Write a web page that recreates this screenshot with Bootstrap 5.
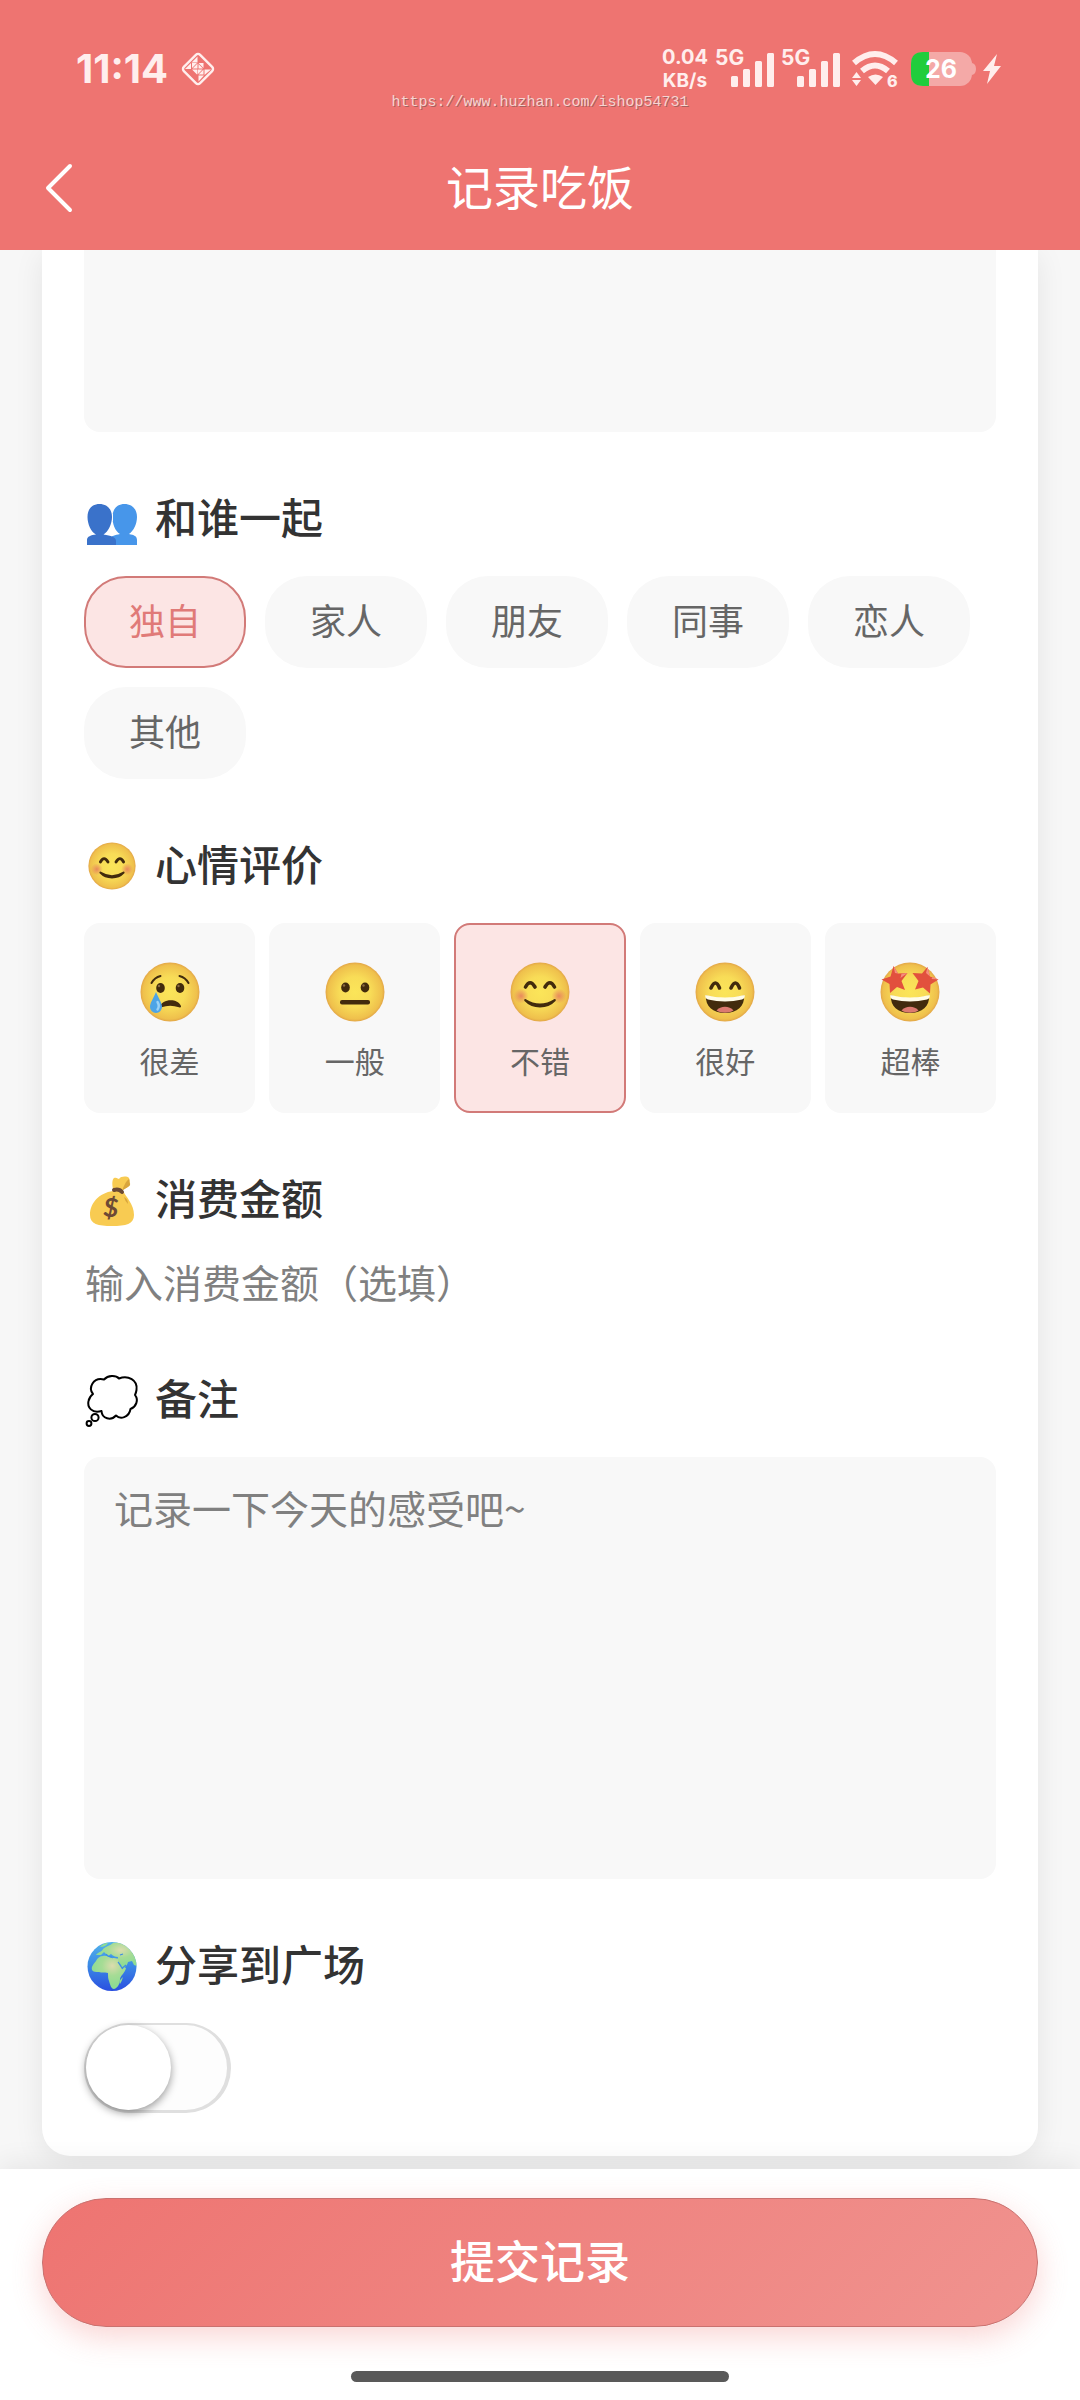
<!DOCTYPE html>
<html lang="zh-CN">
<head>
<meta charset="utf-8">
<meta name="viewport" content="width=device-width, initial-scale=1">
<title>记录吃饭</title>
<link href="https://cdn.jsdelivr.net/npm/bootstrap@5.3.0/dist/css/bootstrap.min.css" rel="stylesheet">
<style>
  :root { --brand: #ee7471; --field: #f8f8f8; --ink: #333; --soft: #666; --picked: #fce5e4; --picked-line: #d27a78; }
  body { font-family: "Noto Sans CJK SC", sans-serif; background: #f7f7f7; color: var(--ink); }
  svg { display: block; flex: none; }

  .app-head { background: var(--brand); z-index: 3; }
  .status-row { height: 126px; padding: 12px 79px 0 76px; color: #ffeeed; font-family: Inter, sans-serif; font-weight: 700; }
  .clock { font-size: 40px; line-height: 48px; }
  .speed { font-size: 20px; line-height: 23px; text-align: center; }
  .speed small { display: block; font-size: 19px; font-weight: 700; }
  .near { margin-left: 7px; }
  .apart { margin-left: 12px; }
  .title-row { height: 124px; padding-bottom: 6px; color: #fff; }
  .title-row h1 { font-size: 47px; line-height: 64px; font-weight: 400; }
  .back-btn { left: 27px; top: 28px; width: 64px; height: 68px; }
  .site-mark { top: 93px; font: 15px/20px "Liberation Mono", monospace; color: #f6d4d2; text-shadow: 1px 1px 0 #a8605e; }

  .form-card { margin: 0 42px 13px; padding: 0 42px 43px; background: #fff; border-radius: 0 0 28px 28px; box-shadow: 0 6px 30px rgba(0,0,0,.08); }
  .form-part { margin-top: 56px; }
  .part-title { gap: 15px; height: 60px; padding-bottom: 4px; margin-bottom: 28px; font-size: 42px; line-height: 56px; font-weight: 500; color: var(--ink); }
  .part-title svg { margin-top: 4px; }
  .field-box { background: var(--field); border: 0; border-radius: 16px; resize: none; padding: 21px 30px; font-size: 39px; line-height: 58px; }
  .field-top { height: 182px; border-radius: 0 0 16px 16px; }
  .field-note { height: 422px; }
  .field-line { border: 0; padding: 0 0 8px 1px; height: 56px; font-size: 39px; line-height: 48px; background: none; }
  .field-box::placeholder, .field-line::placeholder { color: #808080; opacity: 1; }

  .chip-list { gap: 19px; }
  .chip { padding: 0 43px 6px; border: 2px solid transparent; border-radius: 42px; background: var(--field); color: var(--soft); font-size: 36px; line-height: 82px; }
  .mood-list { gap: 14px; }
  .mood { padding: 37px 0 31px; gap: 18px; border: 2px solid transparent; border-radius: 16px; background: var(--field); color: var(--soft); font-size: 30px; line-height: 40px; }
  .btn-check:checked + .chip { background: var(--picked); border-color: var(--picked-line); color: #e07a78; }
  .btn-check:checked + .mood { background: var(--picked); border-color: var(--picked-line); }

  .share-switch { appearance: none; display: block; width: 147px; height: 90px; margin: 0; border: 2px solid #dfdfdf; border-right-width: 4px; border-bottom-width: 3px; border-radius: 45px; background: #fdfdfd; }
  .share-switch::before { content: ""; display: block; width: 85px; height: 85px; border-radius: 50%; background: #fff; box-shadow: 0 3px 8px rgba(0,0,0,.4); }
  .share-switch:checked { background: var(--brand); }
  .share-switch:checked::before { margin-left: auto; }

  .submit-bar { padding: 29px 42px 18px; background: #fff; box-shadow: 0 -6px 26px rgba(0,0,0,.07); z-index: 2; }
  .submit-btn { height: 129px; padding: 0 0 6px; border: 1px solid #c9716f; border-radius: 64px; color: #fff; font-size: 45px; line-height: 60px; font-weight: 500; background: linear-gradient(135deg, #ee7471, #f0938f); box-shadow: 0 10px 30px rgba(238,116,113,.3); }
  .home-line { width: 38%; height: 11px; margin-top: 44px; border-radius: 6px; background: #595959; }
</style>
</head>
<body>
<svg width="0" height="0" class="position-absolute" aria-hidden="true">
  <defs>
    <radialGradient id="skin" cx=".5" cy=".5" r=".52">
      <stop offset="0" stop-color="#fbe559"/><stop offset=".5" stop-color="#f8dc57"/><stop offset=".88" stop-color="#efc04c"/><stop offset="1" stop-color="#dd9a45"/>
    </radialGradient>
    <radialGradient id="blush"><stop offset="0" stop-color="#e88a5c"/><stop offset="1" stop-color="#e88a5c" stop-opacity="0"/></radialGradient>
    <linearGradient id="sea" x1="0" y1="0" x2="0" y2="1"><stop offset="0" stop-color="#52b2ea"/><stop offset=".45" stop-color="#3c8ce6"/><stop offset="1" stop-color="#2a4fe0"/></linearGradient>
    <radialGradient id="land" cx=".6" cy=".3" r=".6"><stop offset="0" stop-color="#dcdcae"/><stop offset=".5" stop-color="#a6dc95"/><stop offset="1" stop-color="#8edc93"/></radialGradient>
    <clipPath id="ball"><circle cx="28" cy="29.500" r="24.500"/></clipPath>
    <symbol id="smile" viewBox="0 0 60 60">
      <circle cx="30" cy="30" r="29.500" fill="url(#skin)"/>
      <circle cx="11" cy="34" r="7.500" fill="url(#blush)"/><circle cx="49" cy="34" r="7.500" fill="url(#blush)"/>
      <path d="M15.500 25q4.500-8.500 9.500 0M35 25q5-8.500 9.500 0" fill="none" stroke="#422b0d" stroke-width="3.600" stroke-linecap="round"/>
      <path d="M15.500 37q14.500 9 29 0 2 0 1 2-6 6.500-15.500 6.500T14.500 39q-1-2 1-2z" fill="#422b0d"/>
    </symbol>
    <symbol id="grin" viewBox="0 0 60 60">
      <circle cx="30" cy="30" r="29.500" fill="url(#skin)"/>
      <path d="M11 33.500c12 3.500 26 3.500 38 0C50 44 42 51 30 51S10 44 11 33.500z" fill="#422b0d"/>
      <path d="M21.500 48.500c4-5 13-5 17 0-5 3-12 3-17 0z" fill="#dc7a70"/>
      <path d="M10.500 33q19.500 5 39 0 1 3-2.500 4.500-17 4-34 0-3.500-1.500-2.500-4.500z" fill="#fffce8"/>
    </symbol>
    <symbol id="signal" viewBox="0 0 59 44">
      <text x="0" y="18" font-family="Inter, sans-serif" font-size="21" font-weight="700" fill="#ffeeed">5G</text>
      <path fill="#ffeeed" d="M17.500 29h4a1.500 1.500 0 0 1 1.500 1.500v8a1.500 1.500 0 0 1-1.500 1.500h-4a1.500 1.500 0 0 1-1.500-1.500v-8a1.500 1.500 0 0 1 1.500-1.500zM29.500 22h4a1.500 1.500 0 0 1 1.500 1.500v15a1.500 1.500 0 0 1-1.500 1.500h-4a1.500 1.500 0 0 1-1.500-1.500v-15a1.500 1.500 0 0 1 1.500-1.500zM41.500 14h4a1.500 1.500 0 0 1 1.500 1.500v23a1.500 1.500 0 0 1-1.500 1.500h-4a1.500 1.500 0 0 1-1.500-1.500v-23a1.500 1.500 0 0 1 1.500-1.500zM53.500 6h4A1.500 1.500 0 0 1 59 7.500v31a1.500 1.500 0 0 1-1.500 1.500h-4a1.500 1.500 0 0 1-1.500-1.500v-31A1.500 1.500 0 0 1 53.500 6z"/>
    </symbol>
  </defs>
</svg>

<div class="d-flex flex-column vh-100 overflow-hidden">
  <header class="app-head position-relative">
    <div class="status-row d-flex align-items-center">
      <span class="clock">11:14</span>
      <svg class="apart" width="36" height="36" viewBox="0 0 36 36" aria-hidden="true">
        <rect x="6.500" y="6.500" width="23" height="23" rx="3" transform="rotate(45 18 18)" fill="none" stroke="#ffeeed" stroke-width="2.400"/>
        <path fill="#ffeeed" d="M17.500 5.500v6h-6zM11 12v6H5zM12 12h5l-5 5zM17.500 12.500v5h-5zM18.500 12h5v5zM18.500 13l4.500 4.500h-4.500zM12 18.500h5v5zM17.500 18.500h5l-5 5zM23.500 18.500v5h-5zM24.500 18.500H31l-6.500 5.500zM18.500 24.500h5.500l-5.500 6z"/>
      </svg>
      <span class="speed ms-auto">0.04<small>KB/s</small></span>
      <svg class="near" width="59" height="44" aria-label="5G"><use href="#signal"/></svg>
      <svg class="near" width="59" height="44" aria-label="5G"><use href="#signal"/></svg>
      <svg class="apart" width="47" height="44" viewBox="0 0 47 44" aria-label="Wi-Fi 6">
        <path d="M2 16q21-18 42 0M10 24q13-11 26 0" fill="none" stroke="#ffeeed" stroke-width="6"/>
        <path fill="#ffeeed" d="M16 30q7.500-5 15 0l-7.500 8zM4.500 25l4.500 6H0zM4.500 39L9 33H0z"/>
        <text x="35" y="40" font-family="Inter, sans-serif" font-size="16" font-weight="800" fill="#ffeeed">6</text>
      </svg>
      <svg class="apart" width="65" height="36" viewBox="0 0 65 36" aria-label="26%">
        <rect x="0" y="1" width="61" height="34" rx="12" fill="#f4a9a7"/>
        <path d="M61 12q4 1 4 6t-4 6z" fill="#f4a9a7"/>
        <path d="M18 1v34h-6Q0 35 0 23V13Q0 1 12 1z" fill="#20cd3c"/>
        <text x="30" y="27" text-anchor="middle" font-family="Inter, sans-serif" font-size="25" font-weight="700" fill="#fff">26</text>
      </svg>
      <svg class="near" width="18" height="32" viewBox="0 0 18 32" aria-hidden="true"><path d="M14 1L0 18h7L4 31l14-18h-7z" fill="#ffeeed"/></svg>
    </div>
    <div class="title-row position-relative d-flex align-items-center justify-content-center">
      <button type="button" class="back-btn btn border-0 p-0 position-absolute d-flex align-items-center justify-content-center" aria-label="返回">
        <svg width="28" height="50" viewBox="0 0 28 50"><path d="M25 3L3 25l22 22" fill="none" stroke="#fff" stroke-width="4" stroke-linecap="round" stroke-linejoin="round"/></svg>
      </button>
      <h1 class="m-0">记录吃饭</h1>
    </div>
    <div class="site-mark position-absolute w-100 text-center">https://www.huzhan.com/ishop54731</div>
  </header>

  <main class="flex-grow-1 overflow-hidden">
    <form id="meal" class="form-card">
      <textarea class="field-box field-top d-block w-100" aria-label="吃饭内容"></textarea>

      <fieldset class="form-part">
        <legend class="part-title d-flex align-items-center">
          <svg width="56" height="56" viewBox="0 0 56 56" aria-hidden="true">
            <path fill="#4796ea" d="M40.500 14c7.500 0 12.500 5 12.500 13 0 7-3.500 14-8 17 5 1 8 2 8 6v5H27v-7c0-2 4-3 9-4-5-3-7.500-10-7.500-17 0-8 4.500-13 12-13z"/>
            <path fill="#3a72ca" d="M15.500 14c7.500 0 12.500 5 12.500 13 0 7-4 15-8.500 17.500C27 45.500 32 47 32 51v4H3v-5c0-3.500 4-5 9-5.500C7 42 3.500 34 3.500 27c0-8 4.500-13 12-13z"/>
            <path d="M28.500 24v7" stroke="#fff" stroke-width="1"/>
          </svg>和谁一起
        </legend>
        <div class="chip-list d-flex flex-wrap">
          <div><input class="btn-check" type="radio" name="with" id="w1" checked><label class="chip d-block" for="w1">独自</label></div>
          <div><input class="btn-check" type="radio" name="with" id="w2"><label class="chip d-block" for="w2">家人</label></div>
          <div><input class="btn-check" type="radio" name="with" id="w3"><label class="chip d-block" for="w3">朋友</label></div>
          <div><input class="btn-check" type="radio" name="with" id="w4"><label class="chip d-block" for="w4">同事</label></div>
          <div><input class="btn-check" type="radio" name="with" id="w5"><label class="chip d-block" for="w5">恋人</label></div>
          <div><input class="btn-check" type="radio" name="with" id="w6"><label class="chip d-block" for="w6">其他</label></div>
        </div>
      </fieldset>

      <fieldset class="form-part">
        <legend class="part-title d-flex align-items-center">
          <svg width="56" height="56" viewBox="0 0 56 56" aria-hidden="true"><use href="#smile" x="4" y="5" width="48" height="48"/></svg>心情评价
        </legend>
        <div class="mood-list d-flex">
          <input class="btn-check" type="radio" name="mood" id="m1">
          <label class="mood flex-fill d-flex flex-column align-items-center" for="m1">
            <svg width="60" height="60" viewBox="0 0 60 60" aria-hidden="true">
              <circle cx="30" cy="30" r="29.500" fill="url(#skin)"/>
              <path d="M11.500 21q3-5.500 9-7M48.500 21q-3-5.500-9-7" fill="none" stroke="#422b0d" stroke-width="2" stroke-linecap="round"/>
              <ellipse cx="20.500" cy="26" rx="4.300" ry="5" fill="#422b0d"/><ellipse cx="40" cy="26" rx="4.300" ry="5" fill="#422b0d"/>
              <circle cx="19" cy="24" r="1.200" fill="#8a6a42"/><circle cx="38.500" cy="24" r="1.200" fill="#8a6a42"/>
              <path d="M19.500 45.500C22 36 38 36 41 44q.5 2-2 1.300-9-3-17.500 0-2.500.7-2 .2z" fill="#422b0d"/>
              <path d="M16 30c3 7 6 11 6 15a6 6 0 0 1-12 0c0-4 3-8 6-15z" fill="#4da4e6"/>
              <path d="M17.500 40q2.500 4 0 7.500" fill="none" stroke="#9ad2f6" stroke-width="2.400" stroke-linecap="round"/>
            </svg>很差
          </label>
          <input class="btn-check" type="radio" name="mood" id="m2">
          <label class="mood flex-fill d-flex flex-column align-items-center" for="m2">
            <svg width="60" height="60" viewBox="0 0 60 60" aria-hidden="true">
              <circle cx="30" cy="30" r="29.500" fill="url(#skin)"/>
              <ellipse cx="20.500" cy="25.500" rx="4.300" ry="5" fill="#422b0d"/><ellipse cx="40" cy="25.500" rx="4.300" ry="5" fill="#422b0d"/>
              <circle cx="19" cy="23.500" r="1.200" fill="#8a6a42"/><circle cx="38.500" cy="23.500" r="1.200" fill="#8a6a42"/>
              <rect x="15" y="38" width="30" height="4.500" rx="2" fill="#422b0d"/>
            </svg>一般
          </label>
          <input class="btn-check" type="radio" name="mood" id="m3" checked>
          <label class="mood flex-fill d-flex flex-column align-items-center" for="m3"><svg width="60" height="60" aria-hidden="true"><use href="#smile"/></svg>不错</label>
          <input class="btn-check" type="radio" name="mood" id="m4">
          <label class="mood flex-fill d-flex flex-column align-items-center" for="m4">
            <svg width="60" height="60" viewBox="0 0 60 60" aria-hidden="true">
              <use href="#grin" width="60" height="60"/>
              <path d="M16 26q4.500-10 8.500 0M36 26q4.500-10 8.500 0" fill="none" stroke="#422b0d" stroke-width="3.600" stroke-linecap="round"/>
            </svg>很好
          </label>
          <input class="btn-check" type="radio" name="mood" id="m5">
          <label class="mood flex-fill d-flex flex-column align-items-center" for="m5">
            <svg width="60" height="60" viewBox="0 0 60 60" aria-hidden="true">
              <use href="#grin" width="60" height="60"/>
              <path d="M13.500 4l4.500 7.500 9.500-.5-6 8L25 28l-8-3-7 6-.5-9L1.500 17.500l9-3z" fill="#e2503d"/>
              <path d="M47.500 5L42 11.500 32.500 11l6 8L35 27.500l8-2 7 6 .5-9 8-5-8.500-3z" fill="#e2503d"/>
              <path d="M13.500 4l4.500 7.500-3-.5zM27.500 11l-7 5 1-4.300zM47.500 5l2.500 9.500-4-3.500zM58.500 17.500l-7-.5 1-2z" fill="#f58d7c"/>
            </svg>超棒
          </label>
        </div>
      </fieldset>

      <div class="form-part">
        <label class="part-title d-flex align-items-center" for="cost">
          <svg width="56" height="56" viewBox="0 0 56 56" aria-hidden="true">
            <path d="M29 18c-1-5-1-9 1-11 3-1 4 1 5 1 2-3 8-3 10-1 1 2 0 3 1 5s-4 5-7 7z" fill="#f8cb52"/>
            <path d="M39 17c2-4 3-7 6-9 1 2 0 3 1 5s-4 4-7 6z" fill="#d9a53c"/>
            <path d="M29 20h10c3 6 11 13 11 24 0 9-8 11-22 11S6 53 6 44c0-12 9-22 23-24z" fill="#f8cb52"/>
            <path d="M40 26q4 2 4 7-3-3-4-7z" fill="#d9a53c"/>
            <path d="M30 19q5-1.500 8 2" fill="none" stroke="#6d4a35" stroke-width="4" stroke-linecap="round"/>
            <text x="27" y="46" text-anchor="middle" font-family="Lato, sans-serif" font-size="26" font-weight="700" fill="#6d4a35" transform="rotate(8 27 37)">$</text>
          </svg>消费金额
        </label>
        <input class="field-line d-block w-100" id="cost" type="text" placeholder="输入消费金额（选填）">
      </div>

      <div class="form-part">
        <label class="part-title d-flex align-items-center" for="note">
          <svg width="56" height="56" viewBox="0 0 56 56" aria-hidden="true" fill="#fff" stroke="#000" stroke-width="2">
            <path d="M9 23C4 17 9 6 20 8.500 24 4 32 4 35 7.500 44 4 54 9 52.500 19q-.5 3-1.500 5c4 5 1 12-4.500 14C45 47 36 48.500 32 44.500 27 50 18 48 17.500 40 8 43 3 36 4.500 30q1-4.500 4.500-7z" stroke-linejoin="round"/>
            <circle cx="11" cy="46.500" r="3.600"/><circle cx="5" cy="52.500" r="2.400"/>
          </svg>备注
        </label>
        <textarea class="field-box field-note d-block w-100" id="note" placeholder="记录一下今天的感受吧~"></textarea>
      </div>

      <div class="form-part">
        <label class="part-title d-flex align-items-center" for="share">
          <svg width="56" height="56" viewBox="0 0 56 56" aria-hidden="true">
            <circle cx="28" cy="29.500" r="24.500" fill="url(#sea)"/>
            <g clip-path="url(#ball)">
              <path fill="url(#land)" d="M8 33c-1-4 2-6 4-9 1-3 4-5 7-5 5-1 7 3 11 2l6 1c1 4 3 8 6 9-1 5-5 7-6 11 0 4-2 9-6 10-3 0-4-5-5-8-1-2-1-5-1-8-4-1-6 0-9-1-3 0-6 0-7-2z"/>
              <path fill="url(#land)" d="M12 18c2-3 6-3 7-6 3-3 7-3 10-6 6-2 14 1 19 7 4 5 6 11 5 16l-3-1-2-4-4 1c-1 4-4 6-6 6-1-4-5-7-4-11-3 0-5-1-7-3l-3 2-4-4-3 3z"/>
              <path fill="#8edc93" d="M36 47q-2-3 3-7-1 4-3 7zM16 10q3-4 8-4-2 4-8 4z"/>
              <path d="M34 25q1 1 4 6M36 18l3-1M22 17q2 3 6 3M42 28q-3 2-4 4" fill="none" stroke="#3c8ce6" stroke-width="1.200"/>
            </g>
          </svg>分享到广场
        </label>
        <input class="share-switch" id="share" type="checkbox" role="switch">
      </div>
    </form>
  </main>

  <footer class="submit-bar position-relative">
    <button type="submit" form="meal" class="submit-btn d-block w-100">提交记录</button>
    <div class="home-line mx-auto"></div>
  </footer>
</div>
<script src="https://cdn.jsdelivr.net/npm/bootstrap@5.3.0/dist/js/bootstrap.bundle.min.js"></script>
</body>
</html>
